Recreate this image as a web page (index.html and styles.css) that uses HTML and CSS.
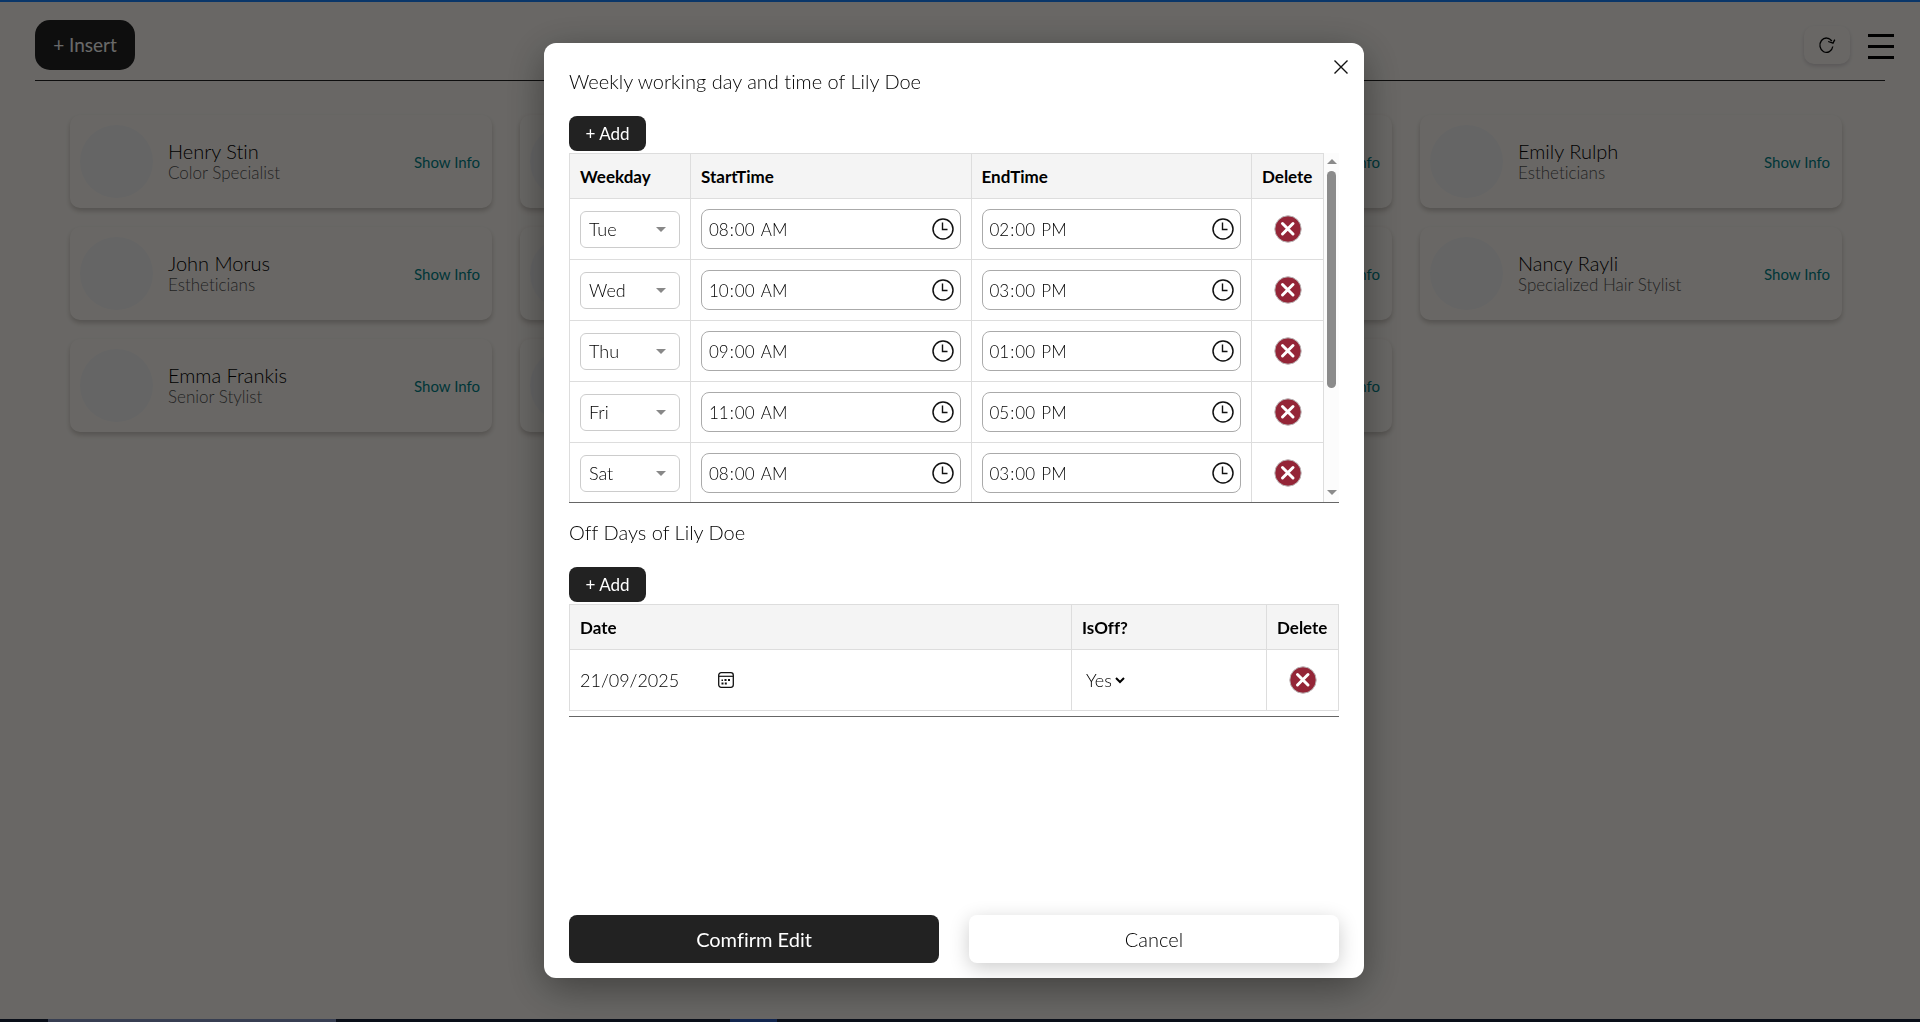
FILE: index.html
```html
<!DOCTYPE html>
<html lang="en">
<head>
<meta charset="utf-8">
<title>Staff</title>
<link rel="stylesheet" href="styles.css">
</head>
<body>
<svg class="sprite" aria-hidden="true">
  <symbol id="clock" viewBox="0 0 22 22"><circle cx="11" cy="11" r="10" fill="none" stroke="#111" stroke-width="1.5"/><path d="M10.500 4.500v7h5" fill="none" stroke="#111" stroke-width="1.4"/></symbol>
  <symbol id="remove" viewBox="0 0 28 28"><circle cx="14" cy="14" r="13.2" fill="#942537" stroke="#b9b4b5" stroke-width="1"/><path d="M8.500 8.500l10.500 10.500M19 8.500l-10.500 10.500" stroke="#fff" stroke-width="3" stroke-linecap="round"/></symbol>
</svg>
<div class="page">
  <header class="topbar">
    <button class="insert" type="button">+ Insert</button>
    <div class="tools">
      <button class="refresh" type="button" aria-label="Refresh">
        <svg width="18" height="18" viewBox="0 0 18 18" fill="none" stroke="#000" stroke-width="1.3"><path d="M14.800 10.500A6.500 7.200 0 1 1 13.800 5.200"/><path d="M10.200 5.500l4.800 1.600L16.800 3.600"/></svg>
      </button>
      <button class="menu" type="button" aria-label="Menu"><span></span><span></span><span></span></button>
    </div>
  </header>
  <main class="staff">
    <article class="card"><div class="avatar"></div><div class="who"><h3>Henry Stin</h3><p>Color Specialist</p></div><a href="#">Show Info</a></article>
    <article class="card"><div class="avatar"></div><a href="#">Show Info</a></article>
    <article class="card"><div class="avatar"></div><a href="#">Show Info</a></article>
    <article class="card"><div class="avatar"></div><div class="who"><h3>Emily Rulph</h3><p>Estheticians</p></div><a href="#">Show Info</a></article>
    <article class="card"><div class="avatar"></div><div class="who"><h3>John Morus</h3><p>Estheticians</p></div><a href="#">Show Info</a></article>
    <article class="card"><div class="avatar"></div><a href="#">Show Info</a></article>
    <article class="card"><div class="avatar"></div><a href="#">Show Info</a></article>
    <article class="card"><div class="avatar"></div><div class="who"><h3>Nancy Rayli</h3><p>Specialized Hair Stylist</p></div><a href="#">Show Info</a></article>
    <article class="card"><div class="avatar"></div><div class="who"><h3>Emma Frankis</h3><p>Senior Stylist</p></div><a href="#">Show Info</a></article>
    <article class="card"><div class="avatar"></div><a href="#">Show Info</a></article>
    <article class="card"><div class="avatar"></div><a href="#">Show Info</a></article>
  </main>
  <footer class="dock"><span class="dock-window"></span><span class="dock-active"></span></footer>
</div>

<div class="overlay">
  <section class="modal" role="dialog" aria-modal="true" aria-labelledby="hours-title">
    <button class="close" type="button" aria-label="Close"><svg width="14" height="14" viewBox="0 0 14 14"><path d="M.5 .5l13 13M13.500 .5l-13 13" stroke="#111" stroke-width="1.4"/></svg></button>
    <h2 id="hours-title">Weekly working day and time of Lily Doe</h2>
    <button class="add" type="button">+ Add</button>
    <div class="scroller">
      <table class="hours">
        <colgroup><col class="c-day"><col><col><col class="c-del"></colgroup>
        <thead><tr><th>Weekday</th><th>StartTime</th><th>EndTime</th><th>Delete</th></tr></thead>
        <tbody>
          <tr><td><select class="day" aria-label="Weekday"><option>Tue</option></select></td><td><label class="time"><input type="time" value="08:00" aria-label="Start time"><svg><use href="#clock"/></svg></label></td><td><label class="time"><input type="time" value="14:00" aria-label="End time"><svg><use href="#clock"/></svg></label></td><td><button class="del" type="button" aria-label="Delete"><svg><use href="#remove"/></svg></button></td></tr>
          <tr><td><select class="day" aria-label="Weekday"><option>Wed</option></select></td><td><label class="time"><input type="time" value="10:00" aria-label="Start time"><svg><use href="#clock"/></svg></label></td><td><label class="time"><input type="time" value="15:00" aria-label="End time"><svg><use href="#clock"/></svg></label></td><td><button class="del" type="button" aria-label="Delete"><svg><use href="#remove"/></svg></button></td></tr>
          <tr><td><select class="day" aria-label="Weekday"><option>Thu</option></select></td><td><label class="time"><input type="time" value="09:00" aria-label="Start time"><svg><use href="#clock"/></svg></label></td><td><label class="time"><input type="time" value="13:00" aria-label="End time"><svg><use href="#clock"/></svg></label></td><td><button class="del" type="button" aria-label="Delete"><svg><use href="#remove"/></svg></button></td></tr>
          <tr><td><select class="day" aria-label="Weekday"><option>Fri</option></select></td><td><label class="time"><input type="time" value="11:00" aria-label="Start time"><svg><use href="#clock"/></svg></label></td><td><label class="time"><input type="time" value="17:00" aria-label="End time"><svg><use href="#clock"/></svg></label></td><td><button class="del" type="button" aria-label="Delete"><svg><use href="#remove"/></svg></button></td></tr>
          <tr><td><select class="day" aria-label="Weekday"><option>Sat</option></select></td><td><label class="time"><input type="time" value="08:00" aria-label="Start time"><svg><use href="#clock"/></svg></label></td><td><label class="time"><input type="time" value="15:00" aria-label="End time"><svg><use href="#clock"/></svg></label></td><td><button class="del" type="button" aria-label="Delete"><svg><use href="#remove"/></svg></button></td></tr>
        </tbody>
      </table>
      <div class="track" aria-hidden="true"><span class="up"></span><span class="thumb"></span><span class="down"></span></div>
    </div>
    <h2>Off Days of Lily Doe</h2>
    <button class="add" type="button">+ Add</button>
    <div class="offdays">
      <table>
        <colgroup><col><col class="c-off"><col class="c-del"></colgroup>
        <thead><tr><th>Date</th><th>IsOff?</th><th>Delete</th></tr></thead>
        <tbody><tr>
          <td><label class="date"><input type="text" value="21/09/2025" aria-label="Date"><svg width="16" height="16" viewBox="0 0 16 16"><rect x=".7" y=".7" width="14.600" height="14.600" rx="2.500" fill="none" stroke="#111" stroke-width="1.3"/><path d="M1 4.300h14" stroke="#111" stroke-width="1.2"/><path d="M6.500 7h2v2h-2zM10 7h2v2h-2zM3.500 7.500h1.500v1.500H3.500zM3.500 10.500h2v2h-2zM6.800 10.500h2v2h-2z" fill="#111"/></svg></label></td>
          <td><span class="yes"><select aria-label="Is off"><option>Yes</option></select></span></td>
          <td><button class="del" type="button" aria-label="Delete"><svg><use href="#remove"/></svg></button></td>
        </tr></tbody>
      </table>
    </div>
    <div class="actions"><button class="confirm" type="button">Comfirm Edit</button><button class="cancel" type="button">Cancel</button></div>
  </section>
</div>
</body>
</html>
```
FILE: styles.css
```css
* { box-sizing: border-box; }
body { margin: 0; background: #fffbf6; font-family: Lato, "Open Sans", sans-serif; font-weight: 300; font-variant-ligatures: none; color: #000; }
button, input, select { font: inherit; font-variant-ligatures: none; color: inherit; margin: 0; }
button { border: 0; background: none; padding: 0; }
h2, h3, p { margin: 0; font-weight: 300; }
.sprite { display: none; }

.page { min-height: 100vh; display: flex; flex-direction: column; border-top: 2px solid #1a83ff; }
.topbar { margin: 0 35px; padding: 18px 0 10px; height: 79px; border-bottom: 1px solid #222; display: flex; justify-content: space-between; align-items: flex-start; }
.insert { width: 100px; height: 50px; border-radius: 15px; background: #222; color: #fff; font-size: 19px; font-weight: 400; padding-bottom: 2px; }
.tools { display: flex; align-items: center; gap: 18px; padding-top: 6px; margin-right: -9px; }
.refresh { width: 46px; height: 38px; border-radius: 10px; display: grid; place-items: center; box-shadow: 0 2px 4px rgba(60, 50, 80, .2); }
.menu { width: 26px; display: flex; flex-direction: column; gap: 8px; padding-top: 2px; }
.menu span { height: 3px; background: #000; }

.staff { margin: 34px 78px 0 70px; display: grid; grid-template-columns: repeat(4, 1fr); gap: 19px 28px; flex: 1; align-content: start; }
.card { height: 93px; padding: 0 12px 0 10px; border-radius: 10px; display: flex; align-items: center; gap: 15px; box-shadow: 0 3px 5px rgba(60, 50, 40, .25); }
.avatar { width: 73px; height: 73px; border-radius: 50%; background: #f5f5f6; }
.who { line-height: 21px; }
.who h3 { font-size: 20px; color: #000; }
.who p { font-size: 17px; color: #555; }
.card a { margin-left: auto; font-size: 15px; font-weight: 400; color: #008489; text-decoration: none; }
.dock { height: 3px; background: #18243c; display: flex; padding-left: 48px; gap: 394px; }
.dock-window { width: 288px; background: #8698c4; }
.dock-active { width: 47px; background: #2a5cc0; }

.overlay { position: fixed; inset: 0; background: rgba(0, 0, 0, .59); display: flex; justify-content: center; padding: 43px 12px 44px 0; }
.modal { position: relative; width: 820px; background: #fff; border-radius: 12px; padding: 24px 25px 15px; display: flex; flex-direction: column; box-shadow: 0 10px 40px rgba(0, 0, 0, .4); }
.close { position: absolute; top: 17px; right: 16px; width: 14px; height: 14px; display: grid; }
h2 { font-size: 20px; line-height: 28px; margin-bottom: 21px; }
.add { width: 77px; height: 35px; flex: none; border-radius: 8px; background: #222; color: #fff; font-size: 17px; font-weight: 400; margin-bottom: 2px; }
.scroller { display: flex; height: 350px; flex: none; overflow: hidden; border-bottom: 1px solid #666; margin-bottom: 15px; }
table { width: 100%; border-collapse: collapse; table-layout: fixed; }
.hours { flex: 1; width: auto; }
.c-day { width: 121px; }
.c-del { width: 72px; }
.c-off { width: 195px; }
th, td { border: 1px solid #ddd; padding: 10px; text-align: left; }
th { height: 45px; padding: 0 10px; background: #f4f4f4; color: #000; font-size: 17px; font-weight: 700; }
td { height: 61px; padding: 0 10px; font-size: 18px; }
.day { display: block; width: 100px; height: 37px; padding: 0 8px; border: 1px solid #ccc; border-radius: 6px; appearance: none; background: linear-gradient(#fff, #fff); }
td:has(> .day) { position: relative; }
td:has(> .day)::after { content: ""; position: absolute; right: 24px; top: 28px; border: 5px solid transparent; border-top-color: #888; border-bottom: 0; pointer-events: none; }
.time { display: flex; align-items: center; height: 40px; padding: 0 6px; border: 1px solid #aaa; border-radius: 8px; font-size: 17px; }
.time input { flex: 1; min-width: 0; border: 0; padding: 0; background: none; }
.time input::-webkit-calendar-picker-indicator { display: none; }
.time svg { width: 22px; height: 22px; }
.del { display: grid; width: 28px; height: 28px; margin: 0 auto; }
.del svg { width: 28px; height: 28px; }
.track { width: 15px; background: #fcfcfc; display: flex; flex-direction: column; align-items: center; padding: 6px 0 7px; }
.up, .down { border: 5px solid transparent; }
.up { border-top: 0; border-bottom-color: #8b8b8b; }
.thumb { width: 9px; height: 217px; margin-top: 7px; border-radius: 5px; background: #8b8b8b; }
.down { margin-top: auto; border-bottom: 0; border-top-color: #8b8b8b; }
.offdays { border-bottom: 1px solid #666; padding-bottom: 5px; }
.date { display: flex; align-items: center; }
.date input { width: 138px; border: 0; padding: 0; background: none; }
.yes { display: flex; }
.yes select { border: 0; padding: 0; background: none; }
.actions { margin-top: auto; display: flex; gap: 30px; }
.actions button { flex: 1; height: 48px; border-radius: 8px; font-size: 20px; }
.confirm { background: #222; color: #fff; }
.actions .confirm { font-weight: 400; }
.cancel { background: #fff; box-shadow: 0 5px 20px rgba(0, 0, 0, .2); }
```
